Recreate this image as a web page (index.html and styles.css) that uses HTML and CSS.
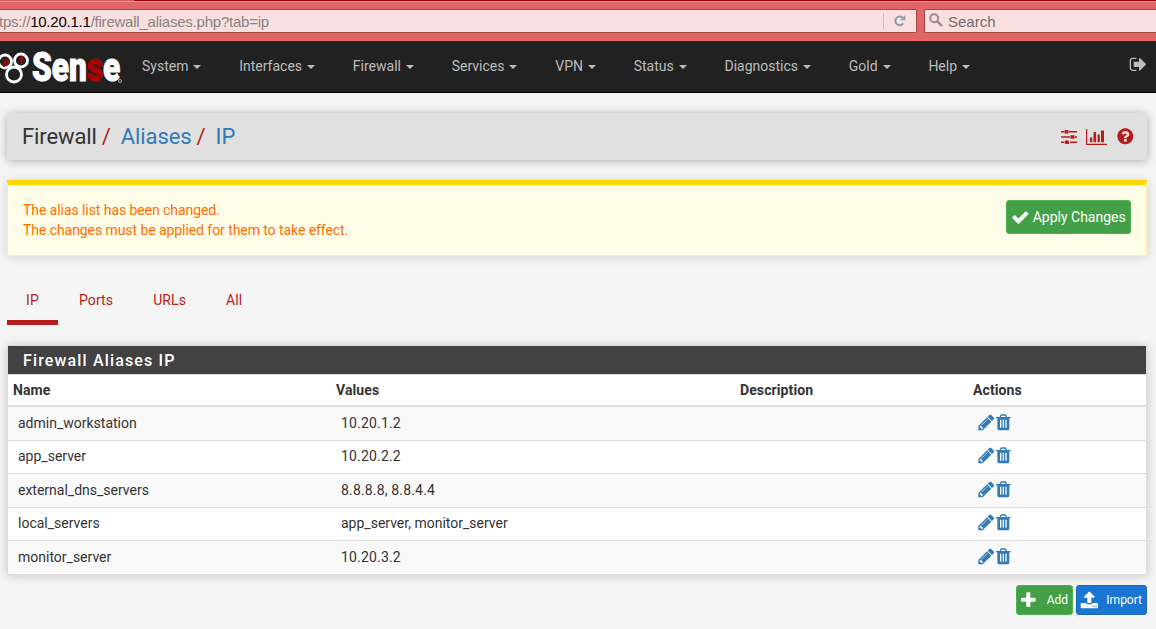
FILE: index.html
```html
<!DOCTYPE html>
<html lang="en">
<head>
  <meta charset="UTF-8" />
  <title>Firewall: Aliases: IP</title>
  <link rel="stylesheet" href="styles.css">
</head>
<body>
  <svg class="sprite" width="0" height="0">
    <symbol id="pencil" viewBox="0 0 1792 1792"><path d="M491 1536l91-91-235-235-91 91v107h128v128h107zm523-928q0-22-22-22-10 0-17 7l-542 542q-7 7-7 17 0 22 22 22 10 0 17-7l542-542q7-7 7-17zm-54-192l416 416-832 832h-416v-416zm683 96q0 53-37 90l-166 166-416-416 166-165q36-38 90-38 53 0 91 38l235 234q37 39 37 91z"/></symbol>
    <symbol id="trash" viewBox="0 0 1792 1792"><path d="M704 1376v-704q0-14-9-23t-23-9h-64q-14 0-23 9t-9 23v704q0 14 9 23t23 9h64q14 0 23-9t9-23zm256 0v-704q0-14-9-23t-23-9h-64q-14 0-23 9t-9 23v704q0 14 9 23t23 9h64q14 0 23-9t9-23zm256 0v-704q0-14-9-23t-23-9h-64q-14 0-23 9t-9 23v704q0 14 9 23t23 9h64q14 0 23-9t9-23zm-544-992h448l-48-117q-7-9-17-11h-317q-10 2-17 11zm928 32v64q0 14-9 23t-23 9h-96v948q0 83-47 143.5t-113 60.5h-832q-66 0-113-58.5t-47-141.5v-952h-96q-14 0-23-9t-9-23v-64q0-14 9-23t23-9h309l70-167q15-37 54-63t79-26h320q40 0 79 26t54 63l70 167h309q14 0 23 9t9 23z"/></symbol>
  </svg>

  <!-- Browser toolbar -->
  <div class="tabstrip"><div class="tab"></div></div>
  <div class="toolbar">
    <div class="urlbar">
      <span class="url">tps://<b>10.20.1.1</b>/firewall_aliases.php?tab=ip</span>
      <span class="reload">
        <svg width="12" height="12" viewBox="0 0 12 12"><path d="M9.3 8.2A4.3 4.3 0 1 1 9 3.2" fill="none" stroke="#8c9cac" stroke-width="2"/><path d="M11.3 0v5.2H6z" fill="#8c9cac"/></svg>
      </span>
    </div>
    <div class="searchbar">
      <svg class="magnifier" width="14" height="14" viewBox="0 0 14 14"><circle cx="5.2" cy="5.2" r="4" stroke-width="2"/><path d="M8.3 8.3l4.7 4.7" stroke-width="2.4"/></svg>
      <span>Search</span>
    </div>
  </div>

  <nav class="navbar">
    <div class="logo">
      <svg width="32" height="50" viewBox="0 0 32 50">
        <g fill="#212121" stroke="#fff" stroke-width="2.8">
          <circle cx="5" cy="19.500" r="6.500"/>
          <circle cx="21" cy="18.500" r="6.500"/>
          <circle cx="14" cy="32.500" r="7.500"/>
        </g>
        <text class="logo-small" x="2.5" y="23">p</text>
        <text class="logo-small" x="19" y="22">f</text>
      </svg>
      <div class="logo-text">Sen<span>s</span>e</div>
      <i class="logo-mark"></i>
    </div>
    <ul class="menu">
      <li>System<i class="caret"></i></li>
      <li>Interfaces<i class="caret"></i></li>
      <li>Firewall<i class="caret"></i></li>
      <li>Services<i class="caret"></i></li>
      <li>VPN<i class="caret"></i></li>
      <li>Status<i class="caret"></i></li>
      <li>Diagnostics<i class="caret"></i></li>
      <li>Gold<i class="caret"></i></li>
      <li>Help<i class="caret"></i></li>
    </ul>
    <svg class="icon signout" viewBox="0 0 1792 1792"><path d="M704 1440q0 4 1 20t.5 26.5-3 23.5-10 19.5-20.5 6.5h-320q-119 0-203.5-84.5t-84.5-203.5v-704q0-119 84.5-203.5t203.5-84.5h320q13 0 22.5 9.5t9.5 22.5q0 4 1 20t.5 26.5-3 23.5-10 19.5-20.5 6.5h-320q-66 0-113 47t-47 113v704q0 66 47 113t113 47h312l11.5 1 11.5 3 8 5.5 7 9 2 13.5zm928-544q0 26-19 45l-544 544q-19 19-45 19t-45-19-19-45v-288h-448q-26 0-45-19t-19-45v-384q0-26 19-45t45-19h448v-288q0-26 19-45t45-19 45 19l544 544q19 19 19 45z"/></svg>
  </nav>

  <div class="container">
    <header class="header">
      <div class="breadcrumb">
        <span>Firewall</span><span class="sep">/</span><a>Aliases</a><span class="sep">/</span><a>IP</a>
      </div>
      <div class="context-links">
        <svg width="16" height="16" viewBox="0 0 16 16"><path d="M0 2h3v1.400H0zM8 2h8v1.400H8zM3.500 1h4v3.600H3.500zM0 7.300h9v1.400H0zM14 7.300h2v1.400h-2zM9.500 6.200h4v3.600h-4zM0 12.600h3.500v1.400H0zM9 12.600h7v1.400H9zM4 11.400h4v3.600H4z"/></svg>
        <svg width="21" height="16" viewBox="0 0 21 16"><path d="M0 0h1.200v14.700H21V16H0zM4 8.500h2.300v4.800H4zM7.500 3h2.600v10.300H7.500zM11.500 5.500h2.300v7.800h-2.300zM15 1.500h3v11.800h-3z"/></svg>
        <svg class="icon help" viewBox="0 0 1792 1792"><path d="M1024 1376v-192q0-14-9-23t-23-9h-192q-14 0-23 9t-9 23v192q0 14 9 23t23 9h192q14 0 23-9t9-23zm256-672q0-88-55.5-163t-138.5-116-170-41q-243 0-371 213-15 24 8 42l132 100q7 6 19 6 16 0 25-12 53-68 86-92 34-24 86-24 48 0 85.5 26t37.5 59q0 38-20 61t-68 45q-63 28-115.5 86.5t-52.5 125.5v36q0 14 9 23t23 9h192q14 0 23-9t9-23q0-19 21.5-49.5t54.5-49.5q32-18 49-28.5t46-35 44.5-48 28-60.5 12.5-81zm384 192q0 209-103 385.5t-279.5 279.5-385.5 103-385.5-103-279.5-279.5-103-385.5 103-385.5 279.5-279.5 385.5-103 385.5 103 279.5 279.5 103 385.5z"/></svg>
      </div>
    </header>

    <div class="alert">
      <p>The alias list has been changed.<br>The changes must be applied for them to take effect.</p>
      <button class="btn btn-apply">
        <svg class="icon" viewBox="0 0 1792 1792"><path d="M1671 566q0 40-28 68l-724 724-136 136q-28 28-68 28t-68-28l-136-136-362-362q-28-28-28-68t28-68l136-136q28-28 68-28t68 28l294 295 656-657q28-28 68-28t68 28l136 136q28 28 28 68z"/></svg>
        <span>Apply Changes</span>
      </button>
    </div>

    <ul class="tabs">
      <li class="active">IP</li>
      <li>Ports</li>
      <li>URLs</li>
      <li>All</li>
    </ul>

    <div class="panel">
      <h2>Firewall Aliases IP</h2>
      <table>
        <thead>
          <tr><th class="c-name">Name</th><th class="c-values">Values</th><th class="c-desc">Description</th><th>Actions</th></tr>
        </thead>
        <tbody>
          <tr><td>admin_workstation</td><td class="num">10.20.1.2</td><td></td><td><div class="actions"><svg class="icon"><use href="#pencil"/></svg><svg class="icon"><use href="#trash"/></svg></div></td></tr>
          <tr><td>app_server</td><td class="num">10.20.2.2</td><td></td><td><div class="actions"><svg class="icon"><use href="#pencil"/></svg><svg class="icon"><use href="#trash"/></svg></div></td></tr>
          <tr><td>external_dns_servers</td><td class="num">8.8.8.8, 8.8.4.4</td><td></td><td><div class="actions"><svg class="icon"><use href="#pencil"/></svg><svg class="icon"><use href="#trash"/></svg></div></td></tr>
          <tr><td>local_servers</td><td>app_server, monitor_server</td><td></td><td><div class="actions"><svg class="icon"><use href="#pencil"/></svg><svg class="icon"><use href="#trash"/></svg></div></td></tr>
          <tr><td>monitor_server</td><td class="num">10.20.3.2</td><td></td><td><div class="actions"><svg class="icon"><use href="#pencil"/></svg><svg class="icon"><use href="#trash"/></svg></div></td></tr>
        </tbody>
      </table>
    </div>

    <div class="action-buttons">
      <button class="btn btn-add">
        <svg class="icon" viewBox="0 0 1792 1792"><path d="M1600 736v192q0 40-28 68t-68 28h-416v416q0 40-28 68t-68 28h-192q-40 0-68-28t-28-68v-416h-416q-40 0-68-28t-28-68v-192q0-40 28-68t68-28h416v-416q0-40 28-68t68-28h192q40 0 68 28t28 68v416h416q40 0 68 28t28 68z"/></svg>
        <span>Add</span>
      </button>
      <button class="btn btn-import">
        <svg class="icon" viewBox="0 0 1792 1792"><path d="M1344 1472q0-26-19-45t-45-19-45 19-19 45 19 45 45 19 45-19 19-45zm256 0q0-26-19-45t-45-19-45 19-19 45 19 45 45 19 45-19 19-45zm128-224v320q0 40-28 68t-68 28h-1472q-40 0-68-28t-28-68v-320q0-40 28-68t68-28h427q21 56 70.5 92t110.5 36h256q61 0 110.5-36t70.5-92h427q40 0 68 28t28 68zm-325-648q-17 40-59 40h-256v448q0 26-19 45t-45 19h-256q-26 0-45-19t-19-45v-448h-256q-42 0-59-40-17-39 14-69l448-448q18-19 45-19t45 19l448 448q31 30 14 69z"/></svg>
        <span>Import</span>
      </button>
    </div>
  </div>
</body>
</html>
```
FILE: styles.css
```css
* { box-sizing: border-box; }

body {
  margin: 0;
  height: 629px;
  overflow: hidden;
  background: #f5f5f5;
  color: #333;
  font-family: Roboto, sans-serif;
  font-size: 14px;
  line-height: 20px;
}

ul, p, h2 {
  margin: 0;
  padding: 0;
  list-style: none;
}

svg {
  display: block;
  flex: none;
  fill: currentColor;
}

.sprite { display: none; }

.icon {
  width: 18.67px;
  height: 18.67px;
}

/* browser toolbar */
.tabstrip {
  height: 1px;
  background: #9c0005;
}

.tab {
  width: 134px;
  height: 1px;
  background: #d9605f;
}

.toolbar {
  display: flex;
  gap: 7px;
  height: 41px;
  padding-top: 7px;
  background: #e06666;
  border-top: 1px solid #eba0a0;
  border-bottom: 1px solid #7c0606;
  font-family: "Liberation Sans", Arial, sans-serif;
  font-size: 15px;
}

.urlbar, .searchbar {
  display: flex;
  align-items: center;
  height: 24px;
  background: #f8e0e0;
  border: 1px solid #a34646;
}

.urlbar {
  width: 917px;
  border-left: none;
  border-radius: 0 2px 2px 0;
  justify-content: space-between;
  color: #8b8080;
}

.url {
  margin: 2px 0 0 -1px;
  letter-spacing: -0.23px;
}

.url b {
  font-weight: normal;
  color: #000;
}

.reload {
  display: flex;
  align-items: center;
  width: 33px;
  height: 16px;
  padding-left: 10px;
  border-left: 1px solid #d5bcbc;
}

.searchbar {
  flex: 1;
  gap: 5px;
  padding-left: 4px;
  border-right: none;
  border-radius: 2px 0 0 2px;
  color: #756a6a;
}

.searchbar span { margin-top: 2px; }

.magnifier {
  margin-top: -2px;
  fill: none;
  stroke: #9b8f8d;
}

/* navbar */
.navbar {
  display: flex;
  height: 51px;
  background: #212121;
  border-bottom: 1px solid #000;
  color: #bdbdbd;
}

.logo {
  display: flex;
  width: 123px;
}

.logo-text {
  width: 87px;
  height: 50px;
  color: #fff;
  font-size: 40px;
  font-weight: 900;
  line-height: 52px;
  transform: scaleX(0.79);
  transform-origin: 0 0;
  -webkit-text-stroke: 1px;
}

.logo-text span { color: #a80000; }

.logo-small {
  font: 900 11px Roboto, sans-serif;
  fill: #a80000;
}

.logo-mark {
  width: 4px;
  height: 4px;
  margin: 37px 0 0 -1px;
  border: 1px solid #aaa;
  border-radius: 50%;
}

.menu {
  display: flex;
  gap: 37.75px;
  margin-left: 19px;
  padding-top: 14px;
}

.menu li {
  display: flex;
  align-items: center;
  height: 20px;
}

.caret {
  margin: 2px 0 0 5px;
  border: 4px solid transparent;
  border-top-color: #bdbdbd;
  border-bottom: 0;
}

.signout {
  margin: 13px 8px 0 auto;
}

/* page */
.container {
  padding: 20px 9px 0 7px;
}

.header {
  display: flex;
  justify-content: space-between;
  align-items: center;
  height: 47px;
  padding: 0 13px 0 15px;
  background: #e0e0e0;
  border-radius: 2px;
  box-shadow: 0 1px 10px rgba(0,0,0,0.3);
}

.breadcrumb {
  font-size: 22px;
  line-height: 24px;
  letter-spacing: -0.1px;
}

.breadcrumb a { color: #337ab7; }

.sep {
  padding: 0 10px 0 5px;
  color: #b71c1c;
}

.context-links {
  display: flex;
  align-items: center;
  gap: 9px;
  color: #b71c1c;
}

.help { margin-right: -1px; }

.alert {
  display: flex;
  justify-content: space-between;
  align-items: flex-start;
  height: 76px;
  margin-top: 20px;
  padding: 15px;
  background: #fffde7;
  border: 1px solid #ffecb3;
  border-top: 5px solid #ffd600;
  box-shadow: 0 1px 10px rgba(0,0,0,0.15);
  color: #ff6f00;
}

.alert p { letter-spacing: -0.07px; }

.btn {
  display: flex;
  align-items: center;
  border: 1px solid;
  border-radius: 3px;
  color: #fff;
  font-family: inherit;
}

.btn-apply {
  width: 125px;
  height: 34px;
  padding: 0 4px;
  gap: 3px;
  font-size: 14px;
  background: #43a047;
  border-color: #4caf50;
}

.tabs {
  display: flex;
  height: 50px;
  margin-top: 19px;
  color: #b71c1c;
  letter-spacing: 0.1px;
}

.tabs li {
  padding: 15px 20px 0;
}

.tabs .active {
  width: 51px;
  margin-right: 1px;
  padding-left: 19px;
  border-bottom: 5px solid #b71c1c;
}

.panel {
  margin-top: 20px;
  background: #fff;
  border: 1px solid #ddd;
  box-shadow: 0 1px 10px rgba(0,0,0,0.2);
}

.panel h2 {
  height: 28px;
  padding-left: 15px;
  background: #424242;
  color: #fff;
  font-size: 16px;
  font-weight: 500;
  line-height: 29px;
  letter-spacing: 1.15px;
}

table {
  width: 100%;
  table-layout: fixed;
  border-collapse: separate;
  border-spacing: 0;
  border-top: 1px solid #ddd;
}

th, td {
  padding: 0 5px;
  text-align: left;
}

th {
  height: 32px;
  font-weight: 700;
  letter-spacing: 0.1px;
  border-bottom: 2px solid #ddd;
}

.c-name { width: 323px; }
.c-values { width: 404px; }
.c-desc { width: 233px; }

td {
  height: 33px;
  padding: 0 10px 2px;
  border-bottom: 1px solid #ddd;
}

.num { letter-spacing: 0.17px; }

tbody tr:nth-child(odd) td {
  height: 34px;
  background: #f9f9f9;
}

tbody tr:last-child td {
  height: 33px;
  padding-bottom: 1px;
  border-bottom: none;
}

.actions {
  display: flex;
  margin: -1px 0 0 -1.5px;
  color: #337ab7;
}

.actions .icon + .icon { margin-left: -1px; }

.action-buttons {
  display: flex;
  justify-content: flex-end;
  gap: 3px;
  margin-top: 10px;
}

.action-buttons .btn {
  height: 30px;
  padding: 0 4px 0 2px;
  justify-content: space-between;
  font-size: 12px;
}

.action-buttons .btn-import { padding-left: 3px; }

.btn-add {
  width: 57px;
  background: #43a047;
  border-color: #4caf50;
}

.btn-import {
  width: 71px;
  background: #1976d2;
  border-color: #1c68b4;
}
```
